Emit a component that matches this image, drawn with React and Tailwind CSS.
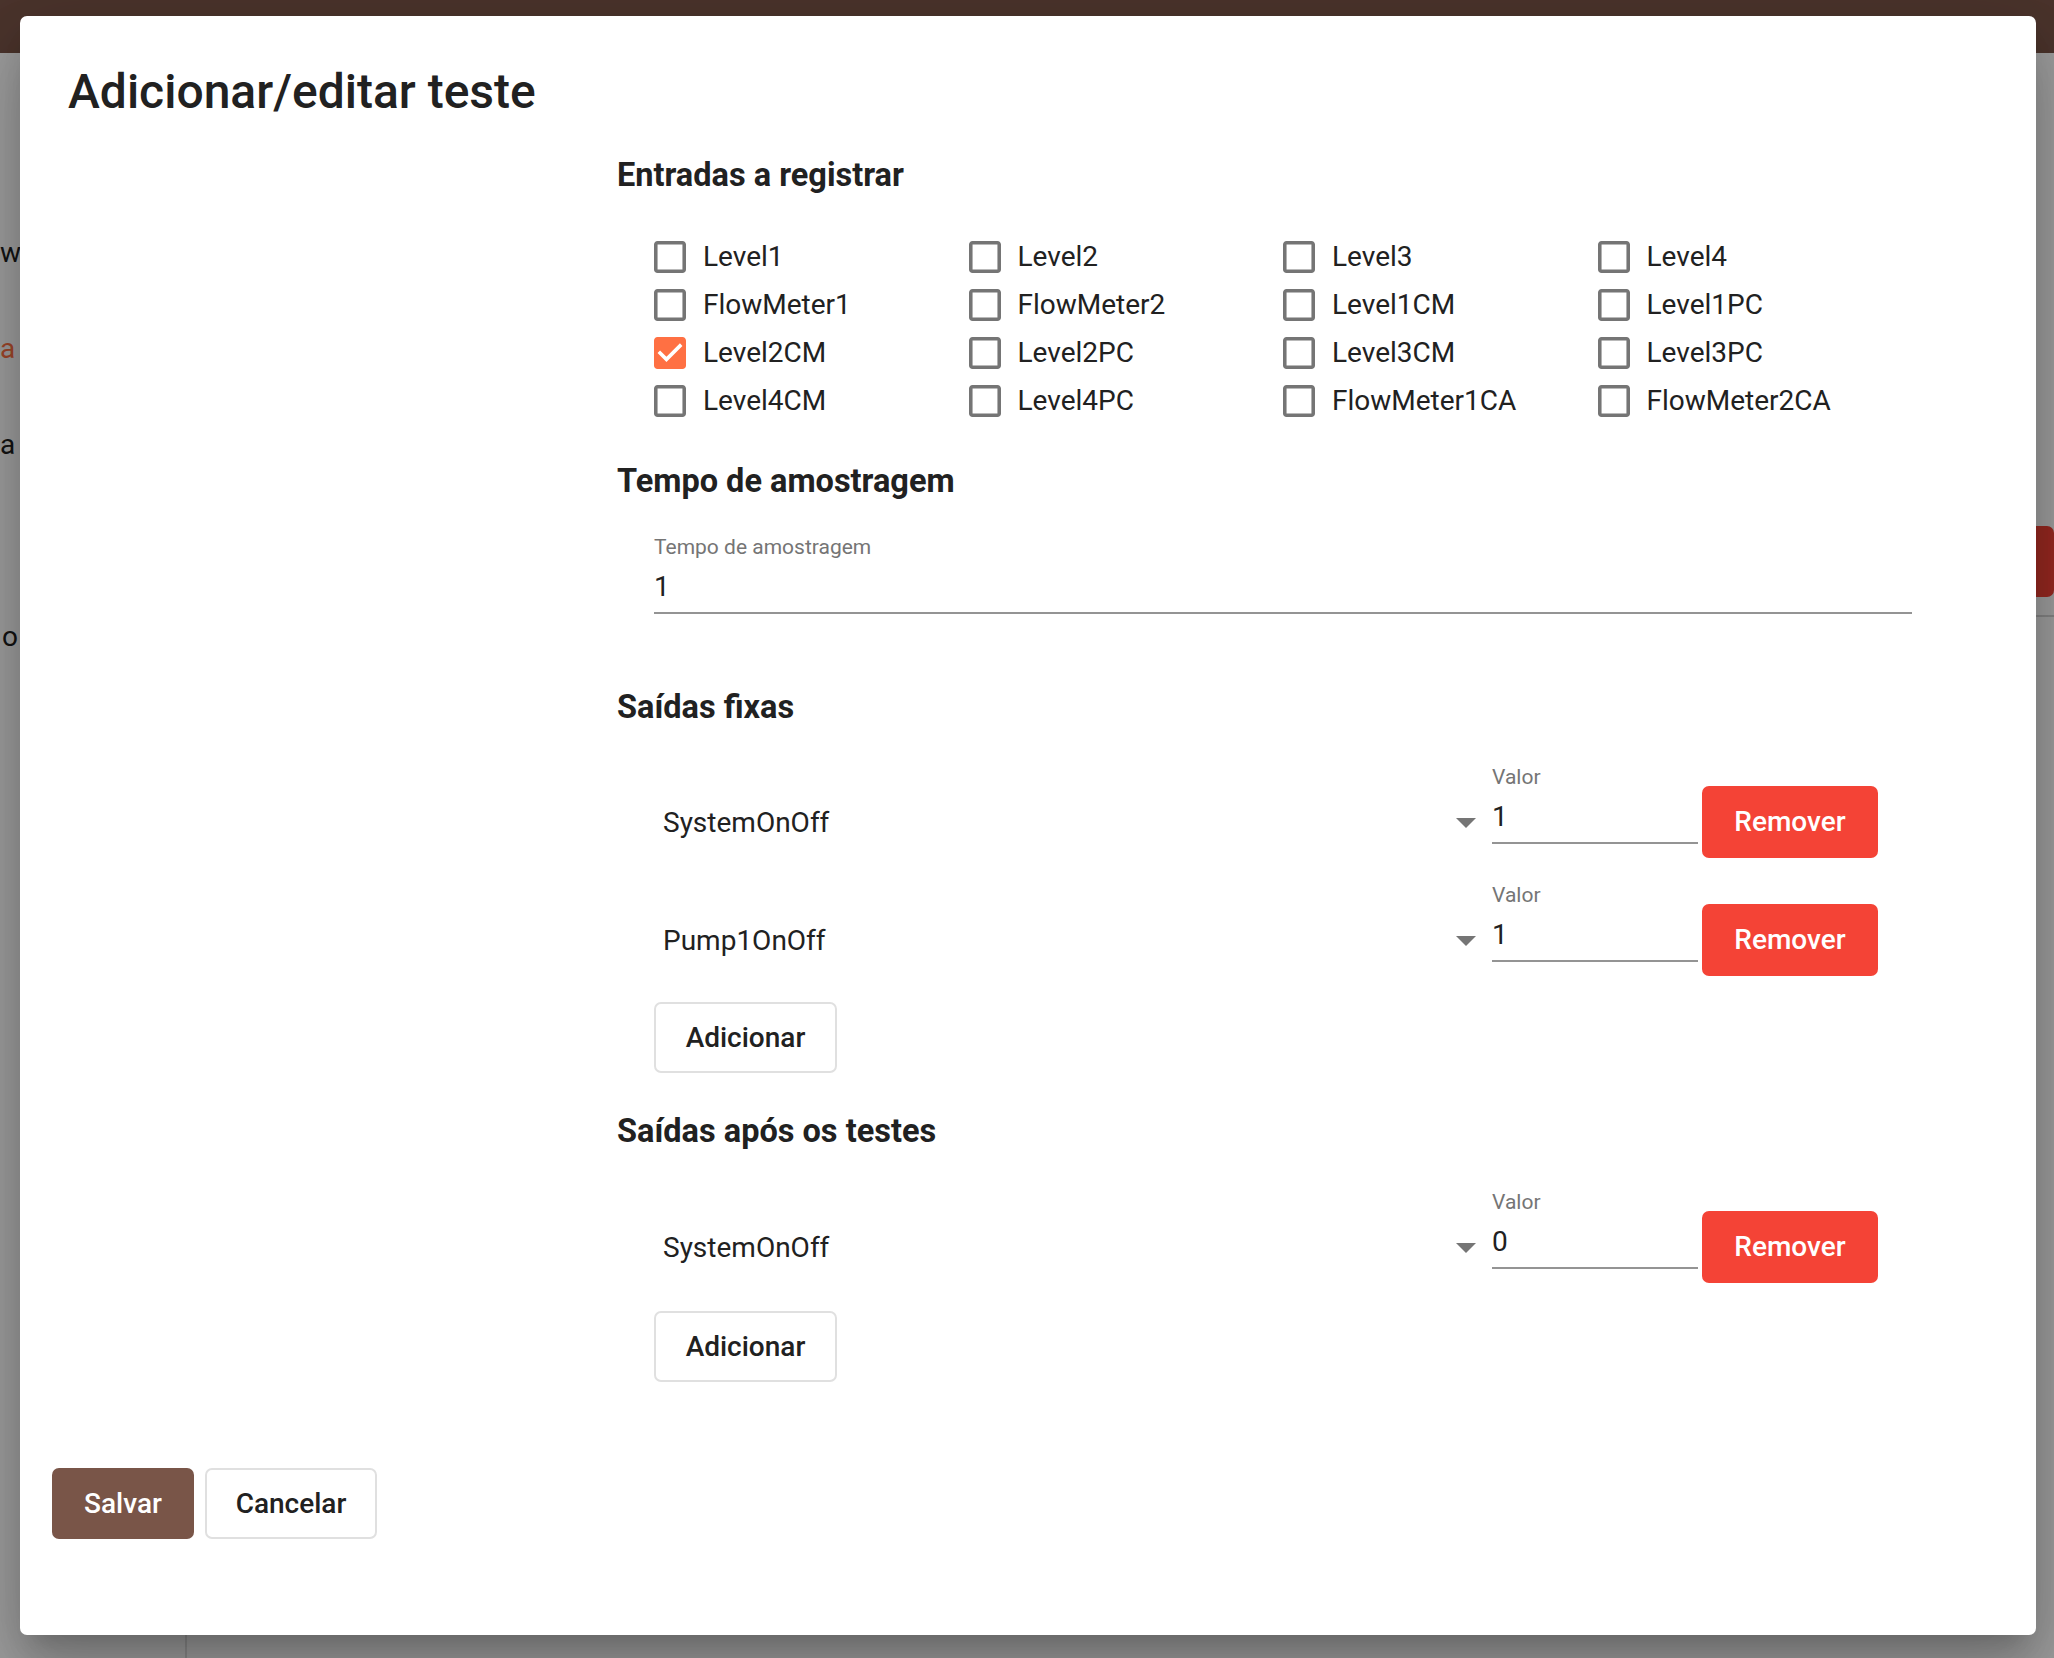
import { useState } from "react";

const INPUTS = [
    "Level1", "Level2", "Level3", "Level4",
    "FlowMeter1", "FlowMeter2", "Level1CM", "Level1PC",
    "Level2CM", "Level2PC", "Level3CM", "Level3PC",
    "Level4CM", "Level4PC", "FlowMeter1CA", "FlowMeter2CA",
];

const FIXED_OUTPUTS = [
    { name: "SystemOnOff", value: "1" },
    { name: "Pump1OnOff", value: "1" },
];

const AFTER_OUTPUTS = [
    { name: "SystemOnOff", value: "0" },
];

// MUI-like checkbox icons
function CheckIcon({ checked }) {
    if (checked) {
        return (
            <svg viewBox="3 3 18 18" className="w-[32px] h-[32px] shrink-0">
                <path fill="#ff7043"
                      d="M19 3H5c-1.11 0-2 .9-2 2v14c0 1.1.89 2 2 2h14c1.11 0 2-.9 2-2V5c0-1.1-.89-2-2-2zm-9 14l-5-5 1.41-1.41L10 14.17l7.59-7.59L19 8l-9 9z"/>
            </svg>
        );
    }
    return (
        <svg viewBox="3 3 18 18" className="w-[32px] h-[32px] shrink-0">
            <path fill="#757575"
                  d="M19 5v14H5V5h14m0-2H5c-1.1 0-2 .9-2 2v14c0 1.1.9 2 2 2h14c1.1 0 2-.9 2-2V5c0-1.1-.9-2-2-2z"/>
        </svg>
    );
}

function SectionTitle({ children, className = "" }) {
    return (
        <h2 className={`ml-[597px] text-[32.5px] leading-[40px] font-bold text-[#212121] ${className}`}>
            {children}
        </h2>
    );
}

function OutputRow({ name, value }) {
    return (
        <div className="flex items-start h-[93px] mr-[35px]">
            <div className="flex-1 mt-[40px] flex items-center justify-between pl-[9px] pr-[16px]">
                <span className="text-[28px] leading-[36px] text-[#212121]">{name}</span>
                <svg viewBox="0 0 20 10" className="w-[20px] h-[10px]">
                    <path d="M0 0h20L10 10z" fill="#757575"/>
                </svg>
            </div>
            <div className="w-[206px]">
                <div className="text-[21px] leading-[24px] text-[#757575]">Valor</div>
                <div className="mt-[10px] pb-[7px] border-b-2 border-[#949494] text-[28px] leading-[36px] text-[#212121]">
                    {value}
                </div>
            </div>
            <button className="ml-[4px] mt-[21px] w-[176px] h-[72px] rounded-[7px] bg-[#f44336] text-white text-[28px] font-medium">
                Remover
            </button>
        </div>
    );
}

function AddButton({ className = "" }) {
    return (
        <button className={`w-[183px] h-[71px] rounded-[7px] border-2 border-[#e0e0e0] bg-white text-[28px] font-medium text-[#212121] ${className}`}>
            Adicionar
        </button>
    );
}

function App() {
    const [checked] = useState({ Level2CM: true });

    return (
        <div className="relative w-[2054px] h-[1658px] overflow-hidden bg-white font-['Roboto',sans-serif]">
            {/* page behind the dialog */}
            <div className="h-[53px] bg-[#795548]"/>
            <div className="flex h-[1605px]">
                <div className="w-[187px] border-r-2 border-[#e0e0e0] pt-[152px] text-[28px] leading-[40px] text-[#212121]">
                    <div className="h-[96px] flex items-center">wa</div>
                    <div className="h-[96px] flex items-center text-[#ff7043]">a</div>
                    <div className="h-[96px] flex items-center">a</div>
                    <div className="h-[96px]"/>
                    <div className="h-[96px] flex items-center ml-[2px]">o</div>
                </div>
                <div className="flex-1 pt-[473px]">
                    <div className="flex justify-end">
                        <button className="w-[176px] h-[71px] rounded-[7px] bg-[#f44336]"/>
                    </div>
                    <div className="mt-[18px] h-[2px] bg-[#d6d6d6]"/>
                </div>
            </div>

            {/* backdrop */}
            <div className="absolute inset-0 bg-black/[0.38]"/>

            {/* dialog */}
            <div className="absolute left-[20px] top-[16px] w-[2016px] h-[1619px] bg-white rounded-[7px] flex flex-col
             shadow-[0_19px_26px_-12px_rgba(0,0,0,0.2),0_42px_66px_5px_rgba(0,0,0,0.14),0_16px_80px_14px_rgba(0,0,0,0.12)]">
                <h1 className="mt-[48px] pl-[48px] text-[48px] leading-[56px] font-medium text-[#212121]">
                    Adicionar/editar teste
                </h1>

                <SectionTitle className="mt-[35px]">Entradas a registrar</SectionTitle>
                <div className="ml-[634px] w-[1258px] mt-[38px] grid grid-cols-4">
                    {INPUTS.map((name) => (
                        <label key={name} className="h-[48px] flex items-center gap-[17px]">
                            <CheckIcon checked={!!checked[name]}/>
                            <span className="text-[28px] leading-[36px] text-[#212121]">{name}</span>
                        </label>
                    ))}
                </div>

                <SectionTitle className="mt-[36px]">Tempo de amostragem</SectionTitle>
                <div className="ml-[634px] w-[1258px] mt-[34px]">
                    <div className="text-[21px] leading-[24px] text-[#757575]">Tempo de amostragem</div>
                    <div className="mt-[10px] pb-[7px] border-b-2 border-[#949494] text-[28px] leading-[36px] text-[#212121]">
                        1
                    </div>
                </div>

                <SectionTitle className="mt-[73px]">Saídas fixas</SectionTitle>
                <div className="ml-[634px] w-[1259px] mt-[38px] flex flex-col">
                    <div className="flex flex-col gap-[25px]">
                        {FIXED_OUTPUTS.map((o) => <OutputRow key={o.name} {...o}/>)}
                    </div>
                    <AddButton className="mt-[26px]"/>
                </div>

                <SectionTitle className="mt-[38px]">Saídas após os testes</SectionTitle>
                <div className="ml-[634px] w-[1259px] mt-[39px] flex flex-col">
                    {AFTER_OUTPUTS.map((o) => <OutputRow key={o.name} {...o}/>)}
                    <AddButton className="mt-[28px]"/>
                </div>

                {/* actions */}
                <div className="mt-auto pl-[32px] pb-[96px] flex gap-[11px]">
                    <button className="w-[142px] h-[71px] rounded-[7px] bg-[#795548] text-white text-[28px] font-medium">
                        Salvar
                    </button>
                    <button className="w-[172px] h-[71px] rounded-[7px] border-2 border-[#e0e0e0] bg-white text-[28px] font-medium text-[#212121]">
                        Cancelar
                    </button>
                </div>
            </div>
        </div>
    );
}

export default App;
